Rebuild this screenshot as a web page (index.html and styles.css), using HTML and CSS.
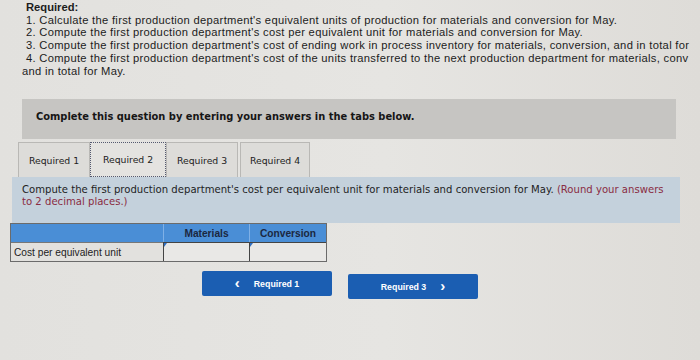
FILE: index.html
```html
<!DOCTYPE html>
<html>
<head>
<meta charset="utf-8">
<link rel="stylesheet" href="styles.css">
</head>
<body>
<div class="page">
  <div class="req">
    <div class="req-title">Required:</div>
    <div class="req-line l1">1. Calculate the first production department's equivalent units of production for materials and conversion for May.</div>
    <div class="req-line l2">2. Compute the first production department's cost per equivalent unit for materials and conversion for May.</div>
    <div class="req-line l3">3. Compute the first production department's cost of ending work in process inventory for materials, conversion, and in total for</div>
    <div class="req-line l4">4. Compute the first production department's cost of the units transferred to the next production department for materials, conv</div>
    <div class="req-line l5">and in total for May.</div>
  </div>

  <div class="banner">Complete this question by entering your answers in the tabs below.</div>

  <div class="tabs">
    <div class="tab">Required 1</div>
    <div class="tab active">Required 2</div>
    <div class="tab">Required 3</div>
    <div class="tab">Required 4</div>
  </div>

  <div class="instr">
    Compute the first production department's cost per equivalent unit for materials and conversion for May. <span class="round">(Round your answers</span><br><span class="round">to 2 decimal places.)</span>
  </div>

  <div class="grid">
    <div class="hcell"></div>
    <div class="hcell">Materials</div>
    <div class="hcell">Conversion</div>
    <div class="lcell">Cost per equivalent unit</div>
    <div class="icell"></div>
    <div class="icell"></div>
  </div>

  <div class="nav">
    <div class="btn prev"><span class="chev">&lsaquo;</span>Required 1</div>
    <div class="btn next">Required 3<span class="chev">&rsaquo;</span></div>
  </div>
</div>
</body>
</html>
```
FILE: styles.css
```css
html, body {
  margin: 0;
  padding: 0;
}
body {
  width: 700px;
  height: 360px;
  overflow: hidden;
  background: linear-gradient(90deg, #e2e1de 0%, #e6e5e2 55%, #dedcd8 100%);
  font-family: "DejaVu Sans", Verdana, sans-serif;
}
.page {
  padding: 1px 0 0 0;
}
.req {
  padding-left: 26px;
  font-family: "Liberation Sans", Arial, sans-serif;
  font-size: 11.2px;
  line-height: 12.7px;
  color: #1c1c1c;
}
.req-title {
  font-weight: 700;
  font-size: 11.2px;
}
.req-line {
  white-space: nowrap;
  letter-spacing: 0.3px;
}
.l5 {
  margin-left: -4px;
}
.banner {
  margin: 22px 0 0 22px;
  width: 654px;
  height: 40px;
  box-sizing: border-box;
  padding: 12px 0 0 14px;
  background: #c6c5c2;
  font-weight: 700;
  font-size: 9.9px;
  color: #161616;
}
.tabs {
  display: flex;
  margin: 3px 0 0 18px;
  height: 35px;
}
.tab {
  width: 72px;
  box-sizing: border-box;
  border: 1px solid #b9b8b5;
  border-bottom: none;
  background: #dddcd9;
  font-size: 9.3px;
  color: #222;
  display: flex;
  align-items: center;
  justify-content: center;
}
.tab.active {
  width: 76px;
  background: #e4e3e0;
  border: 1px dotted #555a70;
}
.tab:nth-child(4) {
  margin-left: 2px;
  width: 70px;
}
.instr {
  margin-left: 12px;
  width: 668px;
  height: 46px;
  box-sizing: border-box;
  padding: 7px 0 0 10px;
  background: #c4d1dc;
  font-size: 10.1px;
  line-height: 12px;
  color: #1e1e1e;
  white-space: nowrap;
}
.round {
  color: #8a2c42;
}
.grid {
  display: grid;
  grid-template-columns: 152px 86px 77px;
  margin-left: 10px;
  width: 315px;
  border: 1px solid #6b6b6b;
  font-family: "Liberation Sans", Arial, sans-serif;
}
.hcell {
  height: 18px;
  background: #4a8ed6;
  border-left: 1px solid #7fb0e6;
  font-weight: 700;
  font-size: 10.2px;
  color: #1b2740;
  display: flex;
  align-items: center;
  justify-content: center;
}
.hcell:first-child {
  border-left: none;
}
.lcell {
  height: 18px;
  border-top: 1px solid #777;
  background: #e2e1de;
  font-size: 10.2px;
  color: #222;
  display: flex;
  align-items: center;
  padding-left: 3px;
}
.icell {
  position: relative;
  height: 18px;
  border-top: 1px solid #444;
  border-left: 1px solid #444;
  background: #e9e8e6;
}
.icell::before {
  content: "";
  position: absolute;
  left: 0;
  top: 0;
  border-top: 4px solid #2f6fc0;
  border-right: 3px solid transparent;
}
.nav {
  display: flex;
  gap: 16px;
  margin: 9px 0 0 202px;
}
.btn {
  width: 130px;
  height: 25px;
  border-radius: 2px;
  background: #1b5eb2;
  color: #fff;
  font-family: "Liberation Sans", Arial, sans-serif;
  font-weight: 700;
  font-size: 8.8px;
  display: flex;
  align-items: center;
  justify-content: center;
}
.btn.next {
  margin-top: 3px;
}
.chev {
  font-size: 15px;
  line-height: 1;
  margin: -2px 14px 0 0;
}
.next .chev {
  margin: -2px 0 0 14px;
}
```
